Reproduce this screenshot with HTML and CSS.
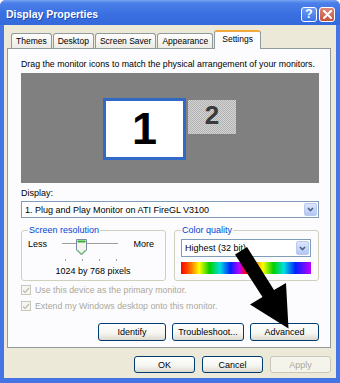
FILE: index.html
```html
<!DOCTYPE html>
<html lang="en">
<head>
    <meta charset="UTF-8">
    <title>Display Properties</title>
    <link rel="stylesheet" href="styles.css">
</head>
<body>
    <div class="window">
        <!-- Barre de titre -->
        <div class="titlebar">
            <span class="title">Display Properties</span>
            <span class="cap-btn help">?</span>
            <span class="cap-btn close">
                <svg width="9" height="9" viewBox="0 0 9 9"><path d="M1 1 L8 8 M8 1 L1 8" stroke="#fff" stroke-width="2" stroke-linecap="round"/></svg>
            </span>
        </div>

        <div class="client">
            <!-- Onglets -->
            <div class="tabs">
                <div class="tab">Themes</div>
                <div class="tab">Desktop</div>
                <div class="tab">Screen Saver</div>
                <div class="tab">Appearance</div>
                <div class="tab active">Settings</div>
            </div>

            <div class="panel">
                <p class="hint">Drag the monitor icons to match the physical arrangement of your monitors.</p>

                <div class="monitors">
                    <div class="mon mon1">1</div>
                    <div class="mon mon2">2</div>
                </div>

                <div class="field-label">Display:</div>
                <div class="combo">
                    <span class="combo-text">1. Plug and Play Monitor on ATI FireGL V3100</span>
                    <span class="combo-btn">
                        <svg width="7" height="5" viewBox="0 0 7 5"><path d="M1 1 L3.5 3.5 L6 1" fill="none" stroke="#4d6185" stroke-width="1.6"/></svg>
                    </span>
                </div>

                <div class="groups">
                    <fieldset class="group">
                        <legend>Screen resolution</legend>
                        <div class="slider-row">
                            <span>Less</span>
                            <div class="slider">
                                <div class="track"></div>
                                <div class="tick" style="left: 7px"></div>
                                <div class="tick" style="left: 24px"></div>
                                <div class="tick" style="left: 41px"></div>
                                <div class="tick" style="left: 58px"></div>
                                <svg class="thumb" width="11" height="17" viewBox="0 0 11 17">
                                    <path d="M0.5 0.5 H10.5 V11 L5.5 16 L0.5 11 Z" fill="#f4f3ee" stroke="#7b8aa3"/>
                                    <path d="M1.5 1.5 H9.5 V3.5 H1.5 Z" fill="#2fb42f"/>
                                    <path d="M1.5 11 L5.5 15 L9.5 11" fill="none" stroke="#3cc43c"/>
                                </svg>
                            </div>
                            <span>More</span>
                        </div>
                        <div class="res-text">1024 by 768 pixels</div>
                    </fieldset>

                    <fieldset class="group color">
                        <legend>Color quality</legend>
                        <div class="combo small">
                            <span class="combo-text">Highest (32 bit)</span>
                            <span class="combo-btn">
                                <svg width="7" height="5" viewBox="0 0 7 5"><path d="M1 1 L3.5 3.5 L6 1" fill="none" stroke="#4d6185" stroke-width="1.6"/></svg>
                            </span>
                        </div>
                        <div class="color-bar"></div>
                    </fieldset>
                </div>

                <div class="check">
                    <span class="box"><svg width="8" height="7" viewBox="0 0 8 7"><path d="M1 3.5 L3 5.5 L7 1" fill="none" stroke="#c4c2b4" stroke-width="1.5"/></svg></span>
                    Use this device as the primary monitor.
                </div>
                <div class="check">
                    <span class="box"><svg width="8" height="7" viewBox="0 0 8 7"><path d="M1 3.5 L3 5.5 L7 1" fill="none" stroke="#c4c2b4" stroke-width="1.5"/></svg></span>
                    Extend my Windows desktop onto this monitor.
                </div>

                <div class="panel-buttons">
                    <button class="btn w-identify">Identify</button>
                    <button class="btn w-trouble">Troubleshoot...</button>
                    <button class="btn w-advanced">Advanced</button>
                </div>
            </div>

            <div class="dialog-buttons">
                <button class="btn">OK</button>
                <button class="btn">Cancel</button>
                <button class="btn disabled">Apply</button>
            </div>
        </div>

        <!-- Grosse flèche noire vers "Advanced" -->
        <svg class="arrow" width="340" height="383" viewBox="0 0 340 383">
            <polygon points="235,254.5 247,247 274,290 286,283 288.5,328.5 250,304.5 262.5,297" fill="#000"/>
        </svg>
    </div>
</body>
</html>
```

FILE: styles.css
```css
* {
    margin: 0;
    padding: 0;
    box-sizing: border-box;
}

body {
    background: #fff;
    font-family: "Liberation Sans", Arial, sans-serif;
    font-size: 9px;
    color: #000;
}

/* Fenêtre style XP */
.window {
    position: relative;
    width: 340px;
    height: 383px;
    background: #4574e4;
    border-radius: 6px 6px 0 0;
    display: flex;
    flex-direction: column;
    overflow: hidden;
}

.titlebar {
    height: 25px;
    display: flex;
    align-items: center;
    gap: 2px;
    padding: 3px 5px 0 6px;
    background: linear-gradient(#78a4f2 0, #4b80ea 3px, #3b71e2 50%, #3469dc 100%);
}

.title {
    flex: 1;
    color: #fff;
    font-weight: bold;
    font-size: 10.5px;
    text-shadow: 1px 1px 0 rgba(10, 30, 110, 0.45);
}

.cap-btn {
    width: 16px;
    height: 15px;
    border: 1px solid #fff;
    border-radius: 3px;
    display: flex;
    align-items: center;
    justify-content: center;
    color: #fff;
    font-weight: bold;
    font-size: 12px;
}

.help {
    background: linear-gradient(#6e9cf2, #3d74e6);
}

.close {
    background: linear-gradient(#dd8a7c, #c6523f);
}

/* Zone client beige */
.client {
    flex: 1;
    margin: 0 4px 5px;
    padding: 5px 5px 0 3px;
    background: #ece9d8;
    display: flex;
    flex-direction: column;
}

/* Onglets */
.tabs {
    display: flex;
    align-items: flex-end;
    height: 18px;
    margin-left: 4px;
    position: relative;
    z-index: 1;
}

.tab {
    height: 15px;
    padding: 0 4px;
    margin-right: 1px;
    line-height: 14px;
    font-size: 8.5px;
    border: 1px solid #919b9c;
    border-bottom: none;
    border-radius: 3px 3px 0 0;
    background: linear-gradient(#fefefe, #ecebe5);
    text-align: center;
}

.tab.active {
    height: 19px;
    margin: 0 0 -1px 0;
    padding: 0 7px;
    line-height: 15px;
    background: #fcfcfe;
    border-top: 2px solid #f3a83a;
}

.panel {
    border: 1px solid #919b9c;
    background: #fcfcfe;
    padding: 0 11px 6px 13px;
}

.hint {
    margin-top: 10px;
    line-height: 11px;
    font-size: 8.8px;
    white-space: nowrap;
}

/* Zone des moniteurs */
.monitors {
    margin-top: 3px;
    height: 110px;
    background: #808080;
    display: flex;
    align-items: flex-start;
    gap: 2px;
    padding: 25px 0 0 82px;
}

.mon {
    display: flex;
    align-items: center;
    justify-content: center;
    font-weight: bold;
}

.mon1 {
    width: 83px;
    height: 62px;
    border: 3px solid #3169c6;
    background: #fff;
    font-size: 45px;
}

.mon2 {
    width: 48px;
    height: 34px;
    margin-top: 2px;
    padding-bottom: 3px;
    background: repeating-conic-gradient(#d6d6d6 0 25%, #b0b0b0 0 50%) 0 0 / 2px 2px;
    color: #3a3a3a;
    font-size: 26px;
}

.field-label {
    margin-top: 5px;
    line-height: 11px;
}

/* Listes déroulantes */
.combo {
    margin-top: 2px;
    height: 17px;
    border: 1px solid #7f9db9;
    background: #fff;
    display: flex;
    align-items: center;
    padding: 0 1px 0 3px;
}

.combo-text {
    flex: 1;
    white-space: nowrap;
    overflow: hidden;
}

.combo-btn {
    width: 13px;
    height: 13px;
    border: 1px solid #b9c9ef;
    border-radius: 2px;
    background: linear-gradient(#dbe5fb, #b4c7f3);
    display: flex;
    align-items: center;
    justify-content: center;
}

.combo.small {
    margin-top: 3px;
    height: 18px;
}

.combo.small .combo-btn {
    height: 14px;
}

/* Groupes */
.groups {
    display: flex;
    gap: 8px;
    margin-top: 7px;
}

.group {
    flex: 1;
    min-width: 0;
    border: 1px solid #d0d0bf;
    border-radius: 3px;
    padding: 0 7px 3px 6px;
}

.group legend {
    margin-left: 0;
    padding: 0 1px;
    line-height: 11px;
    color: #0046d5;
}

.slider-row {
    display: flex;
    justify-content: space-between;
    align-items: flex-start;
    margin-top: 1px;
    padding-right: 4px;
    line-height: 14px;
}

.slider {
    position: relative;
    width: 64px;
    height: 26px;
}

.track {
    position: absolute;
    left: 4px;
    right: 4px;
    top: 6px;
    height: 2px;
    border-top: 1px solid #9d9c99;
    border-bottom: 1px solid #fff;
}

.tick {
    position: absolute;
    top: 22px;
    width: 1px;
    height: 2px;
    background: #a4a39f;
}

.thumb {
    position: absolute;
    left: 18px;
    top: 2px;
}

.res-text {
    margin-top: 3px;
    line-height: 11px;
    text-align: center;
}

.color-bar {
    margin-top: 5px;
    height: 12px;
    background: linear-gradient(to right,
        #ff0000 0, #ff7a00 8%, #ffff00 14%, #00d000 22%, #00e0e0 30%, #0020ff 38%, #c000ff 45%,
        #ff0000 50%, #ff7a00 57%, #ffff00 63%, #00d000 71%, #00e0e0 79%, #0020ff 88%, #c000ff 100%);
}

/* Cases à cocher désactivées */
.check {
    display: flex;
    align-items: center;
    gap: 4px;
    height: 16px;
    font-size: 8.8px;
    color: #aca899;
}

.groups + .check {
    margin-top: 1px;
}

.box {
    width: 10px;
    height: 10px;
    border: 1px solid #c9c7ba;
    background: #f7f7f2;
    display: flex;
    align-items: center;
    justify-content: center;
}

/* Boutons */
.btn {
    height: 18px;
    width: 61px;
    border: 1px solid #003c74;
    border-radius: 3px;
    background: linear-gradient(#ffffff, #f4f4f0 60%, #dcd8cc);
    font-family: inherit;
    font-size: 9px;
    color: #000;
}

.panel-buttons {
    display: flex;
    justify-content: flex-end;
    gap: 6px;
    margin-top: 9px;
}

.w-identify { width: 68px; }
.w-trouble { width: 72px; }
.w-advanced { width: 69px; }

.dialog-buttons {
    display: flex;
    justify-content: flex-end;
    gap: 7px;
    margin-top: 8px;
}

.dialog-buttons .btn {
    height: 17px;
}

.btn.disabled {
    border-color: #c9c7ba;
    background: #f5f4ea;
    color: #aca899;
}

.arrow {
    position: absolute;
    left: 0;
    top: 0;
    pointer-events: none;
}
```
